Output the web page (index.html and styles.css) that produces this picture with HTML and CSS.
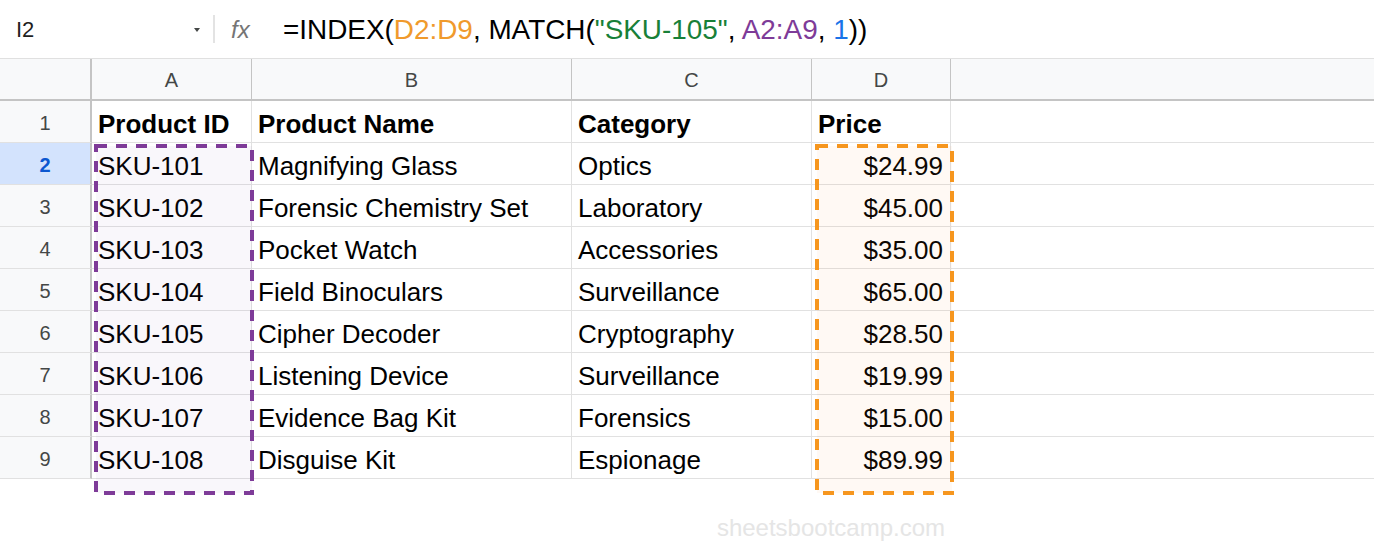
FILE: index.html
```html
<!DOCTYPE html>
<html>
<head>
<meta charset="utf-8">
<link rel="stylesheet" href="styles.css">
</head>
<body>
<div class="formula-bar">
  <div class="namebox"><span class="ref">I2</span><span class="caret"></span></div>
  <div class="sep"></div>
  <div class="fx">fx</div>
  <div class="formula">=INDEX(<span class="c-orange">D2:D9</span>, MATCH(<span class="c-green">"SKU-105"</span>, <span class="c-purple">A2:A9</span>, <span class="c-blue">1</span>))</div>
</div>
<div class="sheet">
  <div class="grid">
    <div class="ch corner"></div><div class="ch">A</div><div class="ch">B</div><div class="ch">C</div><div class="ch">D</div><div class="ch rest"></div>

    <div class="rh">1</div><div class="cell b">Product ID</div><div class="cell b">Product Name</div><div class="cell b">Category</div><div class="cell b">Price</div><div class="cell rest"></div>
    <div class="rh sel">2</div><div class="cell">SKU-101</div><div class="cell">Magnifying Glass</div><div class="cell">Optics</div><div class="cell num">$24.99</div><div class="cell rest"></div>
    <div class="rh">3</div><div class="cell">SKU-102</div><div class="cell">Forensic Chemistry Set</div><div class="cell">Laboratory</div><div class="cell num">$45.00</div><div class="cell rest"></div>
    <div class="rh">4</div><div class="cell">SKU-103</div><div class="cell">Pocket Watch</div><div class="cell">Accessories</div><div class="cell num">$35.00</div><div class="cell rest"></div>
    <div class="rh">5</div><div class="cell">SKU-104</div><div class="cell">Field Binoculars</div><div class="cell">Surveillance</div><div class="cell num">$65.00</div><div class="cell rest"></div>
    <div class="rh">6</div><div class="cell">SKU-105</div><div class="cell">Cipher Decoder</div><div class="cell">Cryptography</div><div class="cell num">$28.50</div><div class="cell rest"></div>
    <div class="rh">7</div><div class="cell">SKU-106</div><div class="cell">Listening Device</div><div class="cell">Surveillance</div><div class="cell num">$19.99</div><div class="cell rest"></div>
    <div class="rh">8</div><div class="cell">SKU-107</div><div class="cell">Evidence Bag Kit</div><div class="cell">Forensics</div><div class="cell num">$15.00</div><div class="cell rest"></div>
    <div class="rh">9</div><div class="cell">SKU-108</div><div class="cell">Disguise Kit</div><div class="cell">Espionage</div><div class="cell num">$89.99</div><div class="cell rest"></div>
  </div>
  <svg class="range range-a" width="160" height="351" viewBox="0 0 160 351"><rect x="2" y="2" width="156" height="347" fill="rgba(126,59,152,0.045)" stroke="#7e3b98" stroke-width="4" stroke-dasharray="11 9"/></svg>
  <svg class="range range-d" width="139" height="351" viewBox="0 0 139 351"><rect x="2" y="2" width="135" height="347" fill="rgba(246,146,30,0.05)" stroke="#f6961e" stroke-width="4" stroke-dasharray="11 9"/></svg>
</div>
<div class="footer"><span class="watermark">sheetsbootcamp.com</span></div>
</body>
</html>
```
FILE: styles.css
```css
html, body {
  margin: 0;
  padding: 0;
  background: #ffffff;
}
body {
  font-family: "Liberation Sans", Arial, sans-serif;
  color: #000;
  width: 1374px;
  height: 546px;
  overflow: hidden;
}
.formula-bar {
  height: 58px;
  border-bottom: 1px solid #e0e0e0;
  display: flex;
  align-items: center;
}
.namebox {
  width: 213px;
  padding-left: 16px;
  padding-top: 2px;
  box-sizing: border-box;
  display: flex;
  align-items: center;
  padding-right: 13px;
}
.ref {
  font-size: 22px;
  color: #1f1f1f;
  flex: 1;
}
.caret {
  width: 0;
  height: 0;
  border-left: 3px solid transparent;
  border-right: 3px solid transparent;
  border-top: 4px solid #444746;
}
.sep {
  width: 2px;
  height: 28px;
  background: #e3e3e3;
}
.fx {
  font-size: 24px;
  font-style: italic;
  color: #757575;
  margin-left: 16px;
  width: 52px;
  padding-top: 2px;
}
.formula {
  font-size: 27.9px;
  color: #000;
  white-space: nowrap;
  padding-top: 2px;
}
.c-orange { color: #f09a2c; }
.c-green { color: #188038; }
.c-purple { color: #7e3b98; }
.c-blue { color: #1a73e8; }

.sheet {
  position: relative;
}
.grid {
  display: grid;
  grid-template-columns: 92px 160px 320px 240px 139px 1fr;
  grid-auto-rows: 42px;
}
.ch {
  background: #f8f9fa;
  border-bottom: 2px solid #c4c4c4;
  border-right: 1px solid #c4c4c4;
  box-sizing: border-box;
  font-size: 20px;
  color: #444746;
  display: flex;
  align-items: center;
  justify-content: center;
  padding-top: 2px;
}
.ch.corner {
  border-right: 2px solid #c4c4c4;
}
.ch.rest {
  border-right: none;
}
.rh {
  background: #f8f9fa;
  border-right: 2px solid #c4c4c4;
  border-bottom: 1px solid #e1e1e1;
  box-sizing: border-box;
  font-size: 20px;
  color: #444746;
  display: flex;
  align-items: center;
  justify-content: center;
  padding-top: 3px;
}
.rh.sel {
  background: #d3e3fd;
  color: #0b57d0;
  font-weight: bold;
}
.cell {
  border-right: 1px solid #e1e1e1;
  border-bottom: 1px solid #e1e1e1;
  box-sizing: border-box;
  font-size: 26px;
  line-height: 41px;
  padding: 3px 7px 0 6px;
  white-space: nowrap;
  overflow: hidden;
}
.cell.b {
  font-weight: bold;
}
.cell.num {
  text-align: right;
}
.cell.rest {
  border-right: none;
}
.range {
  position: absolute;
  top: 85px;
  display: block;
}
.range-a {
  left: 94px;
}
.range-d {
  left: 815px;
}
.footer {
  width: 945px;
  display: flex;
  justify-content: flex-end;
  margin-top: 35px;
}
.watermark {
  font-size: 24px;
  line-height: 28px;
  color: #e5e5e5;
}
```
